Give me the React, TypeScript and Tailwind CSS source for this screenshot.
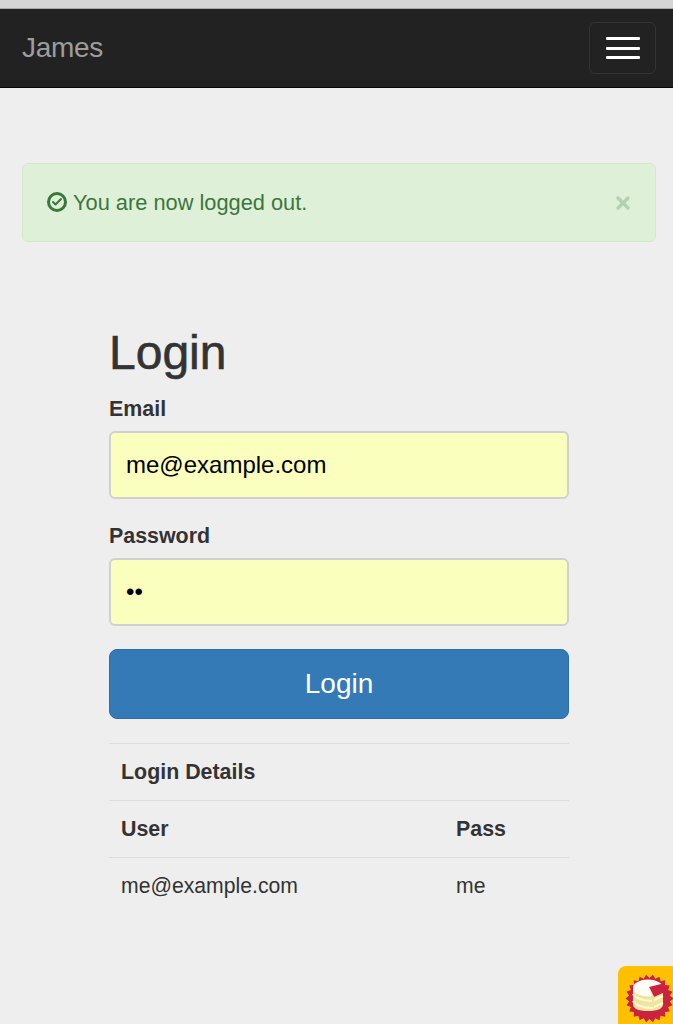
import { Check, X } from 'lucide-react'

const burst = Array.from({ length: 44 }, (_, i) => {
  const a = (i / 44) * Math.PI * 2
  const r = i % 2 === 0 ? 24 : 20.5
  return `${(31.5 + Math.cos(a) * r).toFixed(2)},${(32.5 + Math.sin(a) * r).toFixed(2)}`
}).join(' ')

function CakeBadge() {
  return (
    <div className="fixed bottom-0 right-0 h-[58px] w-[55px] overflow-hidden rounded-tl-[8px] bg-[#ffc000]">
      <svg width="55" height="58" viewBox="0 0 55 58" className="block">
        <polygon points={burst} fill="#cb2240" />
        <path d="M15 22V38Q15 45 30 45Q45 45 45 38V22Z" fill="#f1e59c" />
        <path d="M15 28Q18 34 34 35M15 35Q18 41 35 42M36 34L45 30M36 41L45 37" fill="none" stroke="#fbf8d8" strokeWidth="2" />
        <ellipse cx="30" cy="22" rx="15" ry="8.5" fill="#fffdf5" />
        <path d="M31 21L47 17L47 26L36 31Z" fill="#cb2240" />
        <path d="M31 21L36 31V36Z" fill="#f1e59c" />
      </svg>
    </div>
  )
}

export default function App() {
  return (
    <div className="min-h-screen bg-[#eeeeee] font-['Liberation_Sans',Arial,sans-serif] text-[21.4px] text-[#333333]">
      <div className="h-[9px] border-b border-[#a9a9a9] bg-[#d5d5d5]" />

      {/* Navbar */}
      <nav className="flex h-[79px] items-center justify-between border-b border-[#080808] bg-[#222222] pl-[22px] pr-[17px]">
        <span className="text-[28px] tracking-[-0.3px] text-[#9d9d9d]">James</span>
        <button className="flex h-[52px] w-[67px] flex-col items-center justify-center gap-[6.5px] rounded-[6px] border border-[#333333]">
          <span className="h-[3px] w-[34px] rounded-[1px] bg-white" />
          <span className="h-[3px] w-[34px] rounded-[1px] bg-white" />
          <span className="h-[3px] w-[34px] rounded-[1px] bg-white" />
        </button>
      </nav>

      {/* Alert */}
      <div className="ml-[22px] mr-[17px] mt-[75px] flex h-[79px] items-center justify-between rounded-[6px] border border-[#d6e9c6] bg-[#dff0d8] pl-[24px] pr-[22px] text-[#3c763d]">
        <span className="flex items-center gap-[6px] text-[21.8px]">
          <span className="mb-[2px] flex h-[20px] w-[20px] items-center justify-center rounded-full border-[3px] border-[#3c763d]">
            <Check size={12} strokeWidth={4} />
          </span>
          <span className="mt-[2px]">You are now logged out.</span>
        </span>
        <X size={20} strokeWidth={4} className="text-[#3c763d] opacity-25" />
      </div>

      {/* Login form */}
      <div className="mx-[109px] mt-[84px] w-[460px]">
        <h2 className="text-[48px] leading-[53px] [-webkit-text-stroke:0.6px_#333333]">Login</h2>
        <label className="mt-[14px] block font-bold leading-[32px]">Email</label>
        <input
          readOnly
          value="me@example.com"
          className="mt-[6px] block h-[68px] w-full rounded-[6px] border-2 border-[#d0d0d0] bg-[#fbffbd] px-[15px] text-[24px] text-black"
        />
        <label className="mt-[21px] block font-bold leading-[32px]">Password</label>
        <input
          readOnly
          type="password"
          value="me"
          className="mt-[6px] block h-[68px] w-full rounded-[6px] border-2 border-[#d0d0d0] bg-[#fbffbd] px-[15px] text-[24px] text-black"
        />
        <button className="mt-[23px] h-[70px] w-full rounded-[8px] border border-[#2e6da4] bg-[#337ab7] text-[28px] text-white">
          Login
        </button>

        <table className="mt-[24px] w-full border-collapse">
          <thead>
            <tr className="border-t border-[#dddddd]">
              <th colSpan={2} className="h-[57px] px-[12px] text-left">Login Details</th>
            </tr>
            <tr className="border-t border-[#dddddd]">
              <th className="h-[57px] px-[12px] text-left">User</th>
              <th className="h-[57px] w-[125px] px-[12px] text-left">Pass</th>
            </tr>
          </thead>
          <tbody className="text-[21.2px]">
            <tr className="border-t border-[#dddddd]">
              <td className="h-[57px] px-[12px]">me@example.com</td>
              <td className="h-[57px] px-[12px]">me</td>
            </tr>
          </tbody>
        </table>
      </div>

      <CakeBadge />
    </div>
  )
}
